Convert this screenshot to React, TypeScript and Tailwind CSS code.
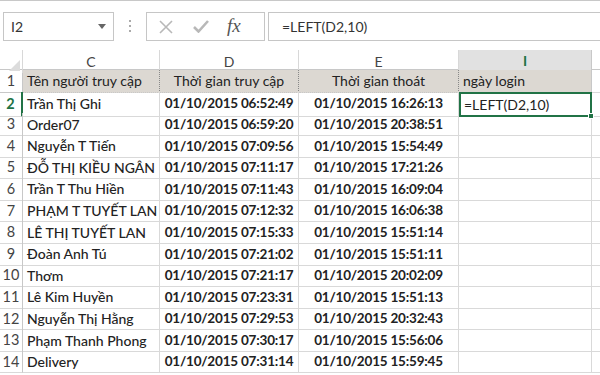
const rows: [string, string, string, string][] = [
  ["Trần Thị Ghi", "01/10/2015 06:52:49", "01/10/2015 16:26:13", "=LEFT(D2,10)"],
  ["Order07", "01/10/2015 06:59:20", "01/10/2015 20:38:51", ""],
  ["Nguyễn T Tiến", "01/10/2015 07:09:56", "01/10/2015 15:54:49", ""],
  ["ĐỖ THỊ KIỀU NGÂN", "01/10/2015 07:11:17", "01/10/2015 17:21:26", ""],
  ["Trần T Thu Hiền", "01/10/2015 07:11:43", "01/10/2015 16:09:04", ""],
  ["PHẠM T TUYẾT LAN", "01/10/2015 07:12:32", "01/10/2015 16:06:38", ""],
  ["LÊ THỊ TUYẾT LAN", "01/10/2015 07:15:33", "01/10/2015 15:51:14", ""],
  ["Đoàn Anh Tú", "01/10/2015 07:21:02", "01/10/2015 15:51:11", ""],
  ["Thơm", "01/10/2015 07:21:17", "01/10/2015 20:02:09", ""],
  ["Lê Kim Huyền", "01/10/2015 07:23:31", "01/10/2015 15:51:13", ""],
  ["Nguyễn Thị Hằng", "01/10/2015 07:29:53", "01/10/2015 20:32:43", ""],
  ["Phạm Thanh Phong", "01/10/2015 07:30:17", "01/10/2015 15:56:06", ""],
  ["Delivery", "01/10/2015 07:31:14", "01/10/2015 15:59:45", ""],
]

const cols = "grid grid-cols-[23px_137px_139px_160px_133px_1fr]"

function FormulaBar() {
  return (
    <div className="flex h-[50px] items-start border-t border-[#c8c8c8] pt-[11px] text-[14px] text-[#333]">
      <div className="ml-[3px] flex h-[29px] w-[111px] items-center justify-between border border-[#c6c6c6] pl-[7px] pr-[7px]">
        <span>I2</span>
        <svg width="8" height="5" viewBox="0 0 8 5">
          <path d="M0 0h8L4 5z" fill="#666" />
        </svg>
      </div>
      <div className="flex w-[32px] flex-col items-center gap-[3px] pt-[8px]">
        <span className="size-[2px] bg-[#aaa]" />
        <span className="size-[2px] bg-[#aaa]" />
        <span className="size-[2px] bg-[#aaa]" />
      </div>
      <div className="flex h-[29px] w-[119px] items-center border border-[#c6c6c6]">
        <svg className="ml-[12px]" width="14" height="14" viewBox="0 0 14 14">
          <path d="M1 1l12 12M13 1L1 13" stroke="#b8b8b8" strokeWidth="1.6" />
        </svg>
        <svg className="ml-[20px]" width="16" height="13" viewBox="0 0 16 13">
          <path d="M1 7l4.5 4.5L15 1" stroke="#b8b8b8" strokeWidth="2.6" fill="none" />
        </svg>
        <span className="ml-[18px] font-['Liberation_Serif',serif] text-[19px] italic text-[#555]">
          fx
        </span>
      </div>
      <div className="ml-[3px] flex h-[29px] flex-1 items-center border border-r-0 border-[#c6c6c6] pl-[13px]">
        =LEFT(D2,10)
      </div>
    </div>
  )
}

function ColumnHeaders() {
  const head = "flex items-center justify-center border-r border-[#d8d8d8]"
  return (
    <div className={`${cols} h-[20px] border-b border-[#c8c8c8] text-[14px] text-[#444]`}>
      <div className="relative border-r border-[#d8d8d8]">
        <svg className="absolute bottom-[2px] right-[2px]" width="11" height="11" viewBox="0 0 11 11">
          <path d="M11 0v11H0z" fill="#dcdcdc" />
        </svg>
      </div>
      <div className={head}>C</div>
      <div className={head}>D</div>
      <div className={head}>E</div>
      <div className="flex items-center justify-center border-r border-[#c8c8c8] border-b-2 border-b-[#217346] bg-[#e1e1e1] font-bold text-[#217346]">
        I
      </div>
      <div />
    </div>
  )
}

export default function App() {
  const cell = "flex items-center border-r border-b border-[#d9d9d9] overflow-hidden whitespace-nowrap"
  const date = "justify-center text-[13.5px] font-bold tracking-[-0.2px]"
  return (
    <div className="h-[375px] w-[600px] overflow-hidden bg-white font-['Lato','Noto_Sans',sans-serif]">
      <FormulaBar />
      <ColumnHeaders />
      <div className={`${cols} h-[21.6px] text-[14px] text-[#222]`}>
        <div className="flex items-center justify-center border-r border-b border-[#c8c8c8] text-[14.5px] text-[#444]">1</div>
        <div className="flex items-center border-r border-dotted border-r-[#888] border-b border-b-[#c8c8c8] bg-[#dcd8d2] pl-[4px]">
          Tên người truy cập
        </div>
        <div className="flex items-center justify-center border-r border-dotted border-r-[#888] border-b border-b-[#c8c8c8] bg-[#dcd8d2]">
          Thời gian truy cập
        </div>
        <div className="flex items-center justify-center border-r border-dotted border-r-[#888] border-b border-b-[#c8c8c8] bg-[#dcd8d2]">
          Thời gian thoát
        </div>
        <div className="flex items-center border-r border-b border-[#c8c8c8] bg-[#dcd8d2] pl-[4px]">
          ngày login
        </div>
        <div className="border-b border-[#d9d9d9]" />
      </div>
      {rows.map(([name, start, end, login], i) => {
        const n = i + 2
        const selected = n === 2
        return (
          <div key={n} className={`${cols} h-[21.6px] text-[14px] text-[#222]`}>
            <div
              className={`flex items-center justify-center border-b border-[#d9d9d9] text-[14.5px] ${
                selected
                  ? "border-r-2 border-r-[#217346] font-bold text-[#217346]"
                  : "border-r border-r-[#c8c8c8] text-[#444]"
              }`}
            >
              {n}
            </div>
            <div className={`${cell} pl-[4px] font-medium`}>{name}</div>
            <div className={`${cell} ${date}`}>{start}</div>
            <div className={`${cell} ${date}`}>{end}</div>
            {selected ? (
              <div className="relative flex items-center border-2 border-[#217346] pl-[3px]">
                {login}
                <span className="absolute -bottom-[4px] -right-[4px] size-[6px] border border-white bg-[#217346]" />
              </div>
            ) : (
              <div className={cell} />
            )}
            <div className="border-b border-[#d9d9d9]" />
          </div>
        )
      })}
    </div>
  )
}
